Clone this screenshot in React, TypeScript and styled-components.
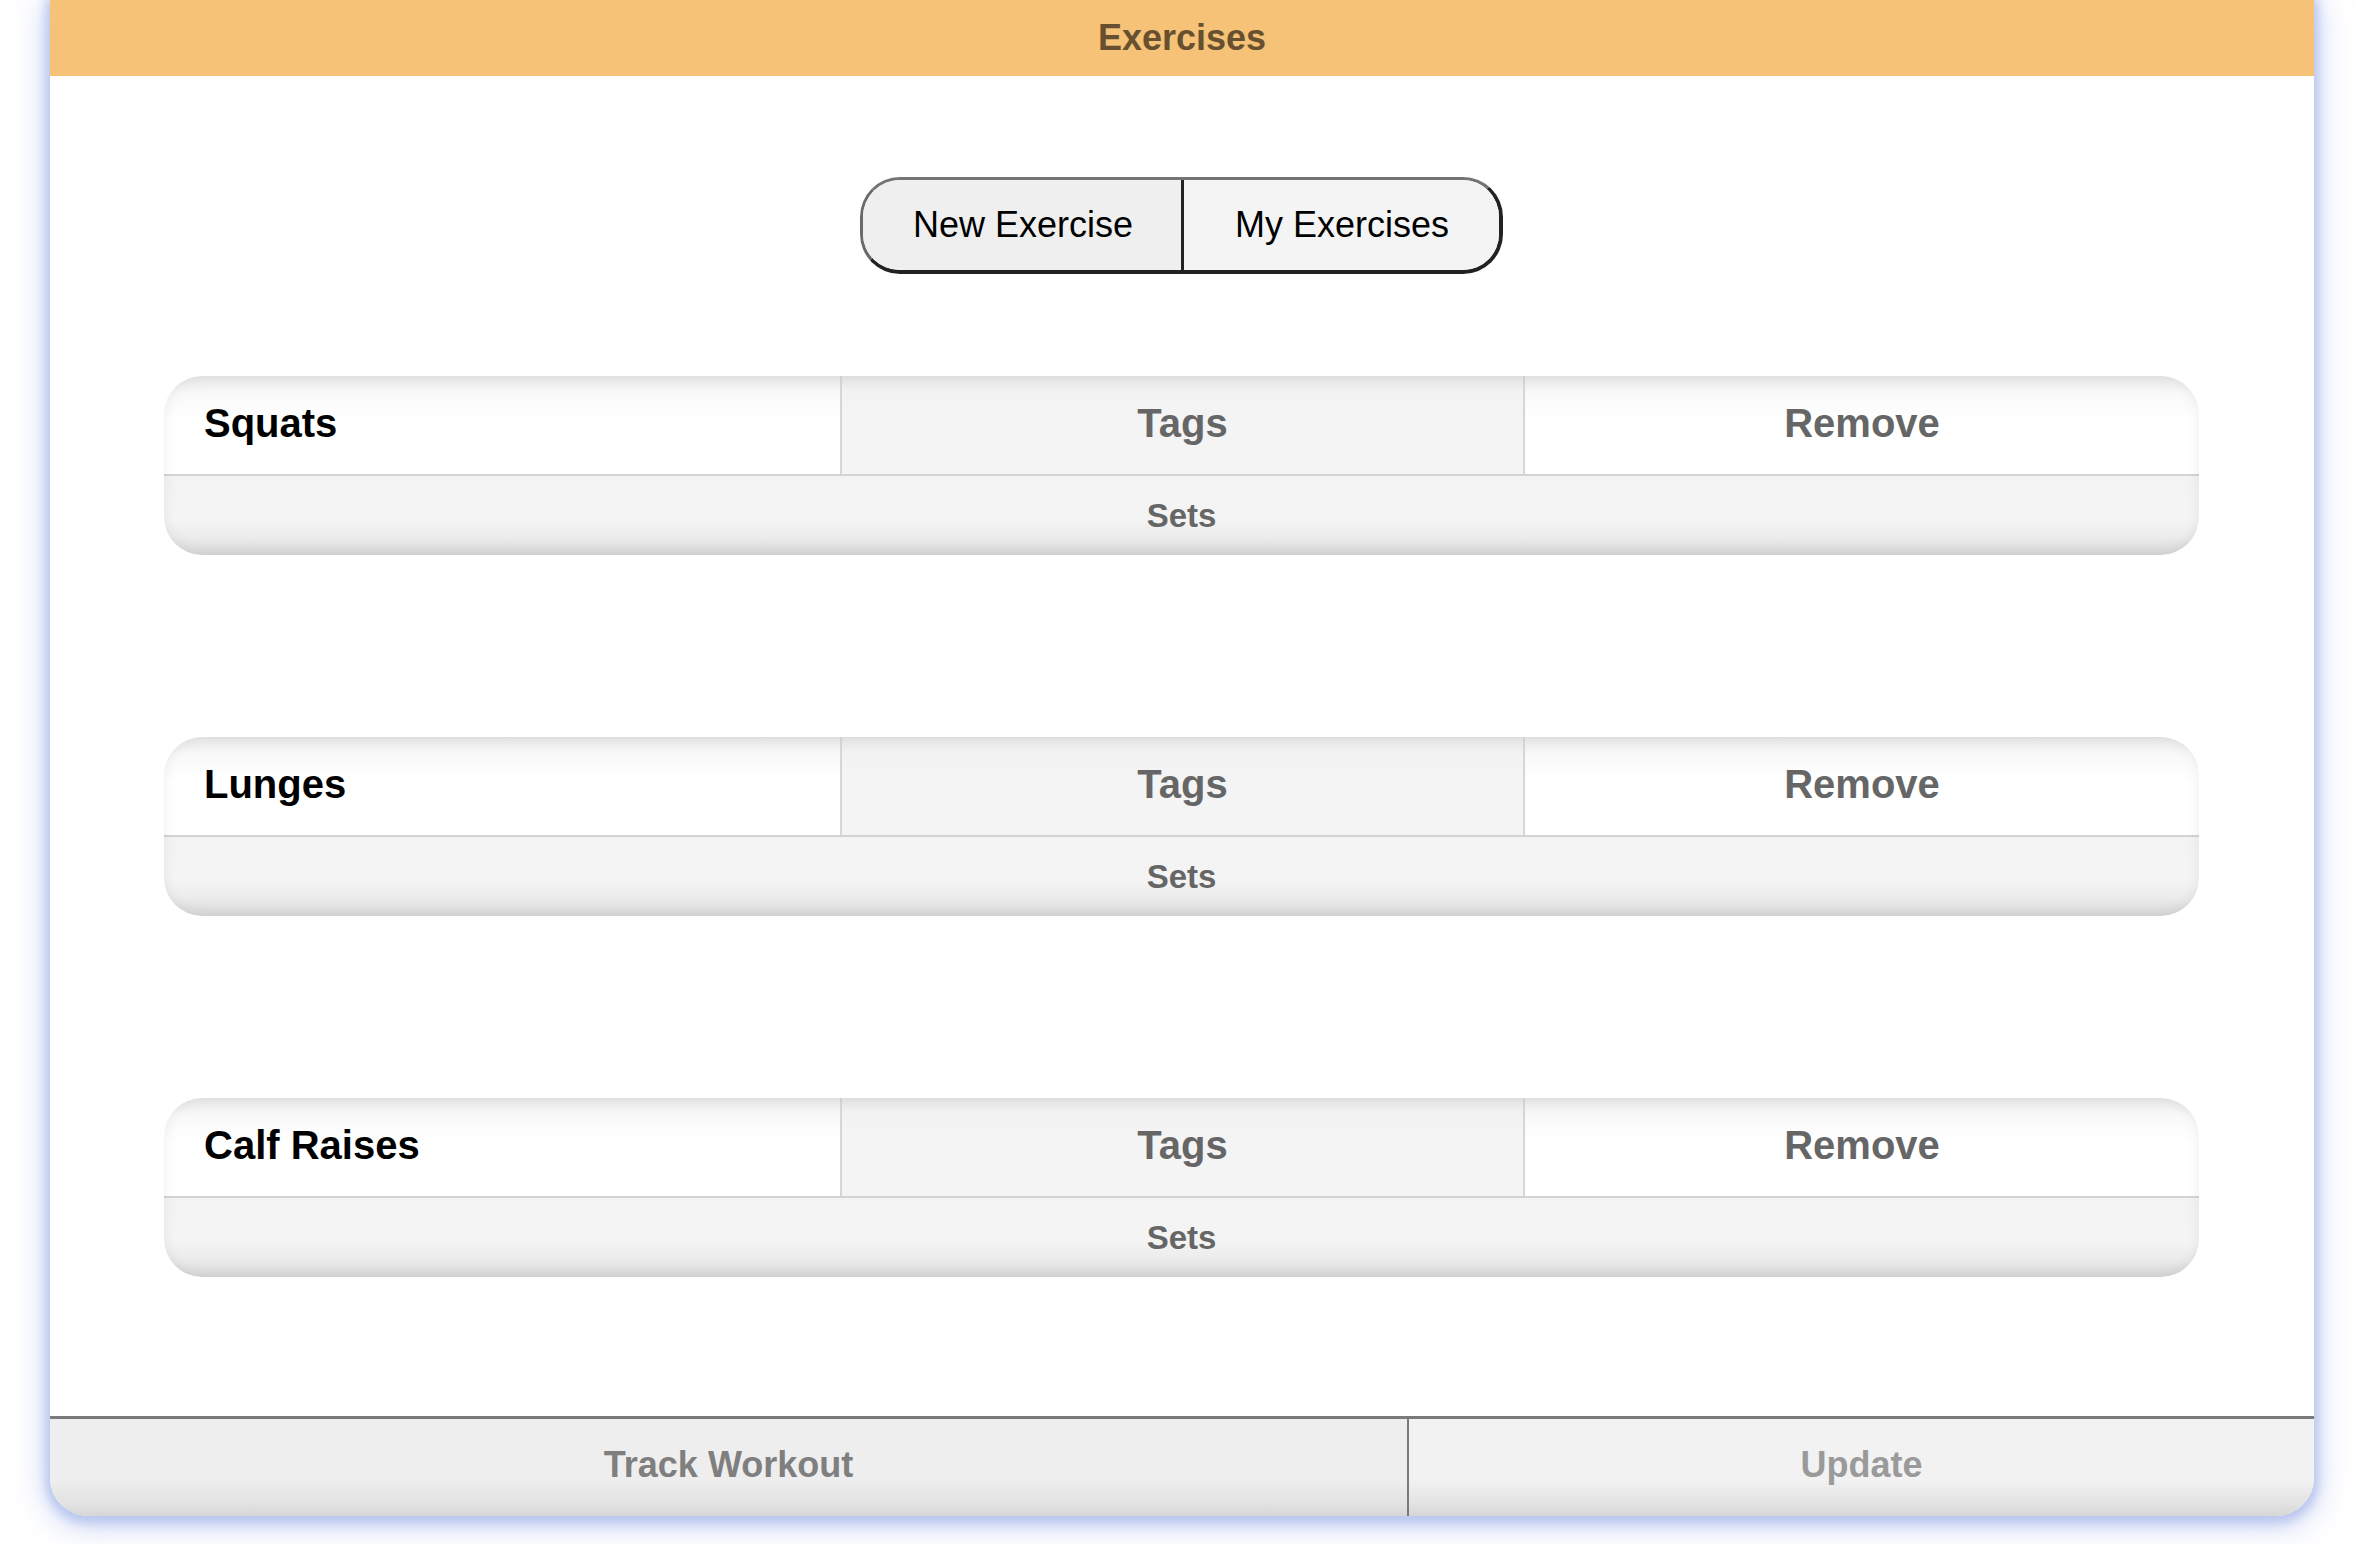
import React from "react";
import styled, { createGlobalStyle } from "styled-components";

const GlobalStyle = createGlobalStyle`
  html, body {
    margin: 0;
    padding: 0;
    background: #ffffff;
  }
  body {
    font-family: "Liberation Sans", Arial, Helvetica, sans-serif;
  }
  * { box-sizing: border-box; }
`;

const Page = styled.div`
  padding: 0 48px 0 50px;
  width: 2362px;
  height: 1544px;
  overflow: hidden;
`;

const Card = styled.div`
  width: 2264px;
  height: 1516px;
  background: #ffffff;
  display: flex;
  flex-direction: column;
  border-radius: 0 0 38px 38px;
  box-shadow: 0 3px 10px 4px rgba(180, 194, 236, 0.85), 0 6px 30px 6px rgba(170, 186, 236, 0.55);
  overflow: hidden;
`;

const Header = styled.header`
  height: 76px;
  background: #f5c277;
  color: #67502f;
  font-weight: 700;
  font-size: 36px;
  display: flex;
  align-items: center;
  justify-content: center;
  flex-shrink: 0;
`;

const Content = styled.main`
  flex: 1;
  display: flex;
  flex-direction: column;
  align-items: center;
  padding: 101px 115px 0 114px;
`;

const Segmented = styled.div`
  display: flex;
  height: 97px;
  border-style: solid;
  border-width: 3px 4px 4px 3px;
  border-color: #747474 #222222 #222222 #6a6a6a;
  border-radius: 40px;
  overflow: hidden;
  margin-bottom: 102px;
`;

const SegButton = styled.button<{ $bg: string; $divider?: boolean }>`
  font-family: "Liberation Sans", Arial, Helvetica, sans-serif;
  font-size: 36px;
  color: #000;
  background: ${(p) => p.$bg};
  border: none;
  border-right: ${(p) => (p.$divider ? "3px solid #222" : "none")};
  height: 100%;
  padding: 0 ${(p) => (p.$divider ? "48px 0 50px" : "50px 0 51px")};
  cursor: pointer;
  display: flex;
  align-items: center;
`;

const ExerciseList = styled.div`
  width: 100%;
  display: flex;
  flex-direction: column;
  gap: 182px;
`;

const ExerciseCard = styled.section`
  position: relative;
  width: 100%;
  height: 179px;
  border-radius: 38px;
  overflow: hidden;
  display: flex;
  flex-direction: column;
  &::after {
    content: "";
    position: absolute;
    inset: 0;
    border-radius: 38px;
    pointer-events: none;
    box-shadow: inset 0 0 14px rgba(0, 0, 0, 0.07);
  }
`;

const TopRow = styled.div`
  display: grid;
  grid-template-columns: 676px 683px 1fr;
  height: 100px;
  border-bottom: 2px solid #d3d3d3;
`;

const Cell = styled.div<{ $shade?: boolean; $align?: "left" | "center"; $dark?: boolean }>`
  display: flex;
  align-items: center;
  justify-content: ${(p) => (p.$align === "left" ? "flex-start" : "center")};
  padding-left: ${(p) => (p.$align === "left" ? "40px" : "0")};
  padding-bottom: 4px;
  font-size: 40px;
  font-weight: 700;
  color: ${(p) => (p.$dark ? "#000" : "#666")};
  background: ${(p) =>
    p.$shade
      ? "linear-gradient(#e6e6e6 0px, #f2f2f2 16px, #f4f4f4 40px, #f4f4f4 100%)"
      : "linear-gradient(#e8e8e8 0px, #f9f9f9 18px, #ffffff 45px, #ffffff 100%)"};
  & + & {
    border-left: 2px solid #d6d6d6;
  }
`;

const SetsRow = styled.div`
  flex: 1;
  display: flex;
  align-items: center;
  justify-content: center;
  font-size: 33px;
  font-weight: 700;
  color: #666;
  background: linear-gradient(#f3f3f3 0%, #f4f4f4 55%, #ebebeb 78%, #d7d7d7 100%);
`;

const Footer = styled.footer`
  height: 100px;
  flex-shrink: 0;
  display: grid;
  grid-template-columns: 1357px 1fr;
  border-top: 3px solid #7a7a7a;
`;

const FooterButton = styled.button<{ $bg: string; $color: string }>`
  font-family: "Liberation Sans", Arial, Helvetica, sans-serif;
  font-size: 36px;
  font-weight: 700;
  color: ${(p) => p.$color};
  border: none;
  background: linear-gradient(${(p) => p.$bg} 0%, ${(p) => p.$bg} 62%, #e2e2e2 88%, #d6d6d6 100%);
  display: flex;
  align-items: center;
  justify-content: center;
  padding-bottom: 6px;
  cursor: pointer;
  & + & {
    border-left: 2px solid #7a7a7a;
  }
`;

const exercises = ["Squats", "Lunges", "Calf Raises"];

export default function App() {
  return (
    <>
      <GlobalStyle />
      <Page>
        <Card>
          <Header>Exercises</Header>
          <Content>
            <Segmented>
              <SegButton $bg="#efefef" $divider>
                New Exercise
              </SegButton>
              <SegButton $bg="#f4f4f4">My Exercises</SegButton>
            </Segmented>
            <ExerciseList>
              {exercises.map((name) => (
                <ExerciseCard key={name}>
                  <TopRow>
                    <Cell $align="left" $dark>
                      {name}
                    </Cell>
                    <Cell $shade>Tags</Cell>
                    <Cell>Remove</Cell>
                  </TopRow>
                  <SetsRow>Sets</SetsRow>
                </ExerciseCard>
              ))}
            </ExerciseList>
          </Content>
          <Footer>
            <FooterButton $bg="#eeeeee" $color="#7f7f7f">
              Track Workout
            </FooterButton>
            <FooterButton $bg="#f2f2f2" $color="#9a9a9a">
              Update
            </FooterButton>
          </Footer>
        </Card>
      </Page>
    </>
  );
}
